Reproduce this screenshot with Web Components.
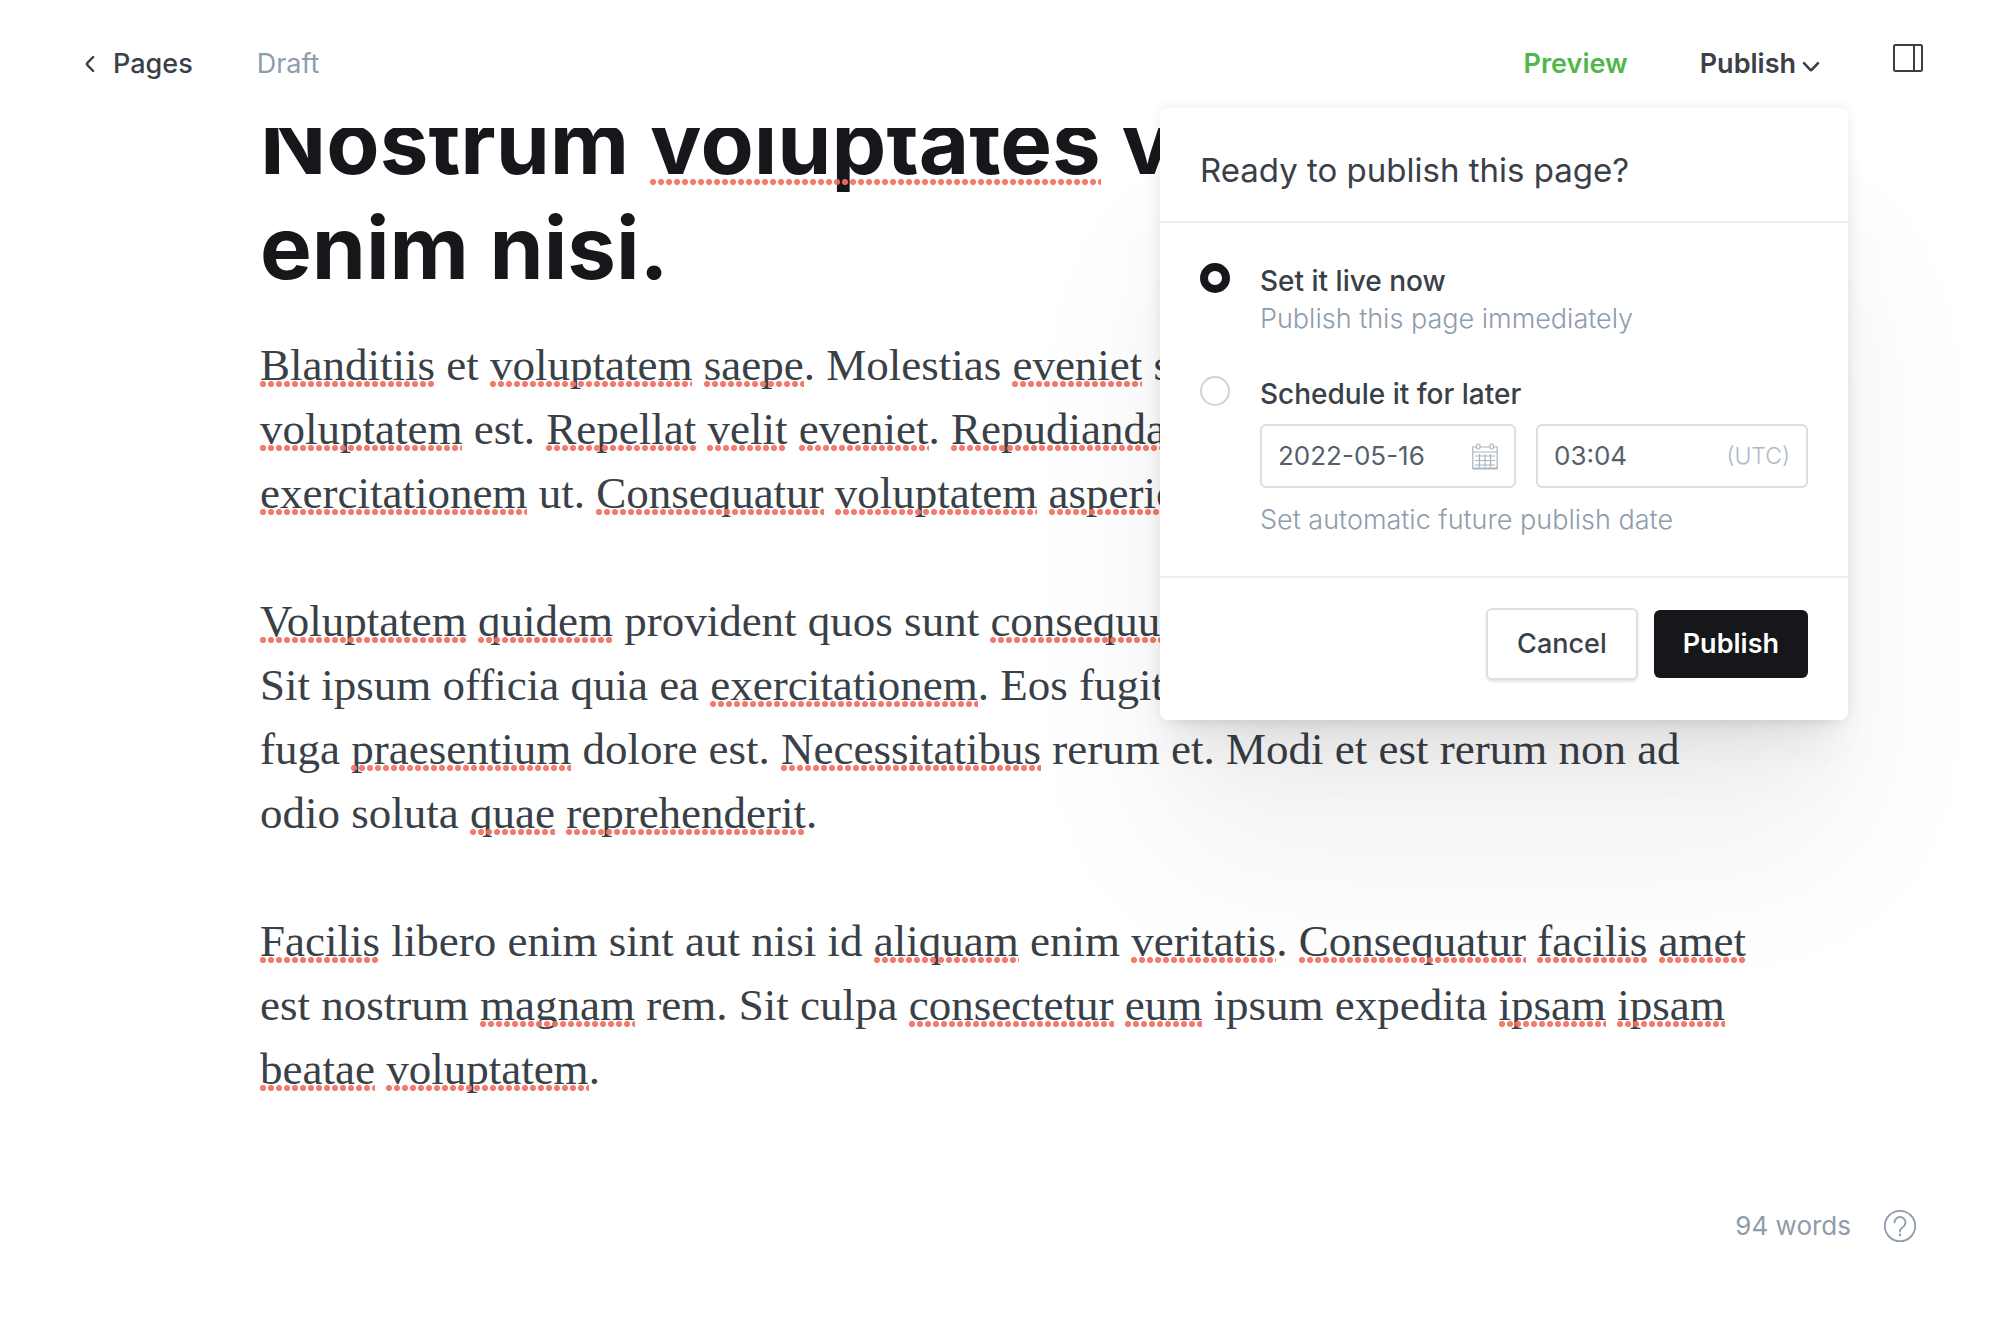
<!DOCTYPE html>
<html lang="en">
<head>
<meta charset="utf-8">
<title>Edit page</title>
<style>
html, body { margin: 0; height: 100%; background: #fff; }
body { font-family: Inter, "Liberation Sans", sans-serif; font-size: 27px; line-height: 32px; color: #394047; }
</style>
</head>
<body>
<editor-app>
  <editor-header slot="header"></editor-header>
  <editor-article slot="article">
    <span slot="title">Nostrum <spell-error large>voluptates</spell-error> v<br>enim nisi.</span>
    <p><spell-error>Blanditiis</spell-error> et <spell-error>voluptatem</spell-error> <spell-error>saepe</spell-error>. Molestias <spell-error>eveniet</spell-error> sed<br>
    <spell-error>voluptatem</spell-error> est. <spell-error>Repellat</spell-error> <spell-error>velit</spell-error> <spell-error>eveniet</spell-error>. <spell-error>Repudiandae</spell-error><br>
    <spell-error>exercitationem</spell-error> ut. <spell-error>Consequatur</spell-error> <spell-error>voluptatem</spell-error> <spell-error>asperio</spell-error></p>
    <p><spell-error>Voluptatem</spell-error> <spell-error>quidem</spell-error> provident quos sunt <spell-error>consequun</spell-error><br>
    Sit ipsum officia quia ea <spell-error>exercitationem</spell-error>. Eos fugit to<br>
    fuga <spell-error>praesentium</spell-error> dolore est. <spell-error>Necessitatibus</spell-error> rerum et. Modi et est rerum non ad<br>
    odio soluta <spell-error>quae</spell-error> <spell-error>reprehenderit</spell-error>.</p>
    <p><spell-error>Facilis</spell-error> libero enim sint aut nisi id <spell-error>aliquam</spell-error> enim <spell-error>veritatis</spell-error>. <spell-error>Consequatur</spell-error> <spell-error>facilis</spell-error> <spell-error>amet</spell-error><br>
    est nostrum <spell-error>magnam</spell-error> rem. Sit culpa <spell-error>consectetur</spell-error> <spell-error>eum</spell-error> ipsum expedita <spell-error>ipsam</spell-error> <spell-error>ipsam</spell-error><br>
    <spell-error>beatae</spell-error> <spell-error>voluptatem</spell-error>.</p>
  </editor-article>
  <editor-status slot="status">94 words</editor-status>
  <publish-popover slot="popover">Ready to publish this page?</publish-popover>
</editor-app>

<script>
const define = (name, html) => {
  const template = document.createElement('template');
  template.innerHTML = html;
  customElements.define(name, class extends HTMLElement {
    constructor() {
      super();
      this.attachShadow({ mode: 'open' }).append(template.content.cloneNode(true));
    }
  });
};

define('editor-app', `
<style>
  :host { display: grid; grid-template-rows: 128px minmax(0, 1fr) auto; height: 100vh; position: relative; overflow: hidden; }
  main { overflow: hidden; min-height: 0; }
</style>
<slot name="header"></slot>
<main><slot name="article"></slot></main>
<slot name="status"></slot>
<slot name="popover"></slot>`);

define('editor-header', `
<style>
  :host { display: block; }
  header { height: 128px; box-sizing: border-box; padding: 0 76px 0 84px; display: flex; align-items: center; justify-content: space-between; }
  nav, .actions { display: flex; align-items: center; }
  nav { gap: 64px; }
  a { display: flex; align-items: center; gap: 17px; color: #394047; text-decoration: none; font-weight: 500; }
  .draft { color: #8e9cac; }
  button { font: inherit; color: inherit; background: none; border: 0; padding: 0; display: flex; align-items: center; cursor: pointer; font-weight: 600; }
  .preview { color: #50b749; margin-right: 72px; }
  .publish { gap: 6px; }
  .publish svg { margin-top: 6px; }
  .panel { margin: 0 0 12px 72px; }
  svg { display: block; fill: none; stroke: #394047; }
</style>
<header>
  <nav>
    <a href="#pages"><svg width="12" height="18" viewBox="0 0 12 18" stroke-width="2.4" stroke-linecap="round" stroke-linejoin="round"><path d="M9.200 2 3.200 8.200q-.8.800 0 1.600L9.200 16"/></svg>Pages</a>
    <span class="draft">Draft</span>
  </nav>
  <div class="actions">
    <button class="preview">Preview</button>
    <button class="publish">Publish<svg width="18" height="12" viewBox="0 0 18 12" stroke-width="2.600" stroke-linecap="round" stroke-linejoin="round"><path d="M2 2.200 8.300 8.800q.7.700 1.400 0L16 2.200"/></svg></button>
    <button class="panel" aria-label="Settings"><svg width="32" height="30" viewBox="0 0 32 30" stroke-width="2"><rect x="2" y="2" width="28" height="26" rx="1.500"/><path d="M22 2v26"/></svg></button>
  </div>
</header>`);

define('spell-error', `
<style>
  :host { position: relative; }
  :host::after {
    content: ""; position: absolute; left: 0; right: 0; bottom: 3px; height: 6px;
    background: radial-gradient(circle at 3px 3px, #f4705f 2.700px, transparent 3.400px) 0 0 / 8px 6px repeat-x;
    opacity: .92;
  }
  :host([large])::after { bottom: 10px; }
</style><slot></slot>`);

define('editor-article', `
<style>
  :host { display: block; max-width: 1480px; margin: 0 auto; margin-top: -38px; }
  h1 { margin: 0 0 33px; font-size: 87px; line-height: 105px; font-weight: 700; color: #15171a; }
  .body { display: flex; flex-direction: column; gap: 64px; font-family: Georgia, "Liberation Serif", serif; font-size: 45px; line-height: 64px; white-space: nowrap; }
  ::slotted(p) { margin: 0; }
</style>
<article>
  <h1><slot name="title"></slot></h1>
  <div class="body"><slot></slot></div>
</article>`);

define('editor-status', `
<style>
  :host { display: flex; justify-content: flex-end; align-items: center; gap: 32px; padding: 0 83px 77px 0; font-size: 26px; color: #8e9cac; }
  button { border: 0; padding: 0; background: none; }
  svg { display: block; fill: none; stroke: #8e9cac; stroke-width: 1.800; stroke-linecap: round; }
</style>
<slot></slot>
<button aria-label="Help"><svg width="34" height="34" viewBox="0 0 34 34"><circle cx="17" cy="17" r="15.200"/><path d="M11.500 13.500a5.500 5.500 0 1 1 9.600 3.600c-1.500 1.500-4.100 2-4.100 5v.4"/><path d="M17 25.800v.2" stroke-width="2.400"/></svg></button>`);

define('publish-popover', `
<style>
  :host {
    display: block; position: absolute; top: 108px; right: 152px; width: 688px; background: #fff; border-radius: 8px;
    box-shadow: 0 0 14px rgba(0,0,0,.08), 0 10px 11px -10px rgba(0,0,0,.03), 0 19px 20px -10px rgba(0,0,0,.03), 0 34px 36px -10px rgba(0,0,0,.04), 0 64px 67px -10px rgba(0,0,0,.03), 0 140px 160px -10px rgba(0,0,0,.06);
  }
  h2 { margin: 0; padding: 42px 40px 31px; font-size: 33px; line-height: 40px; font-weight: 400; border-bottom: 2px solid #eee; }
  form { margin: 0; }
  fieldset { border: 0; margin: 0; padding: 40px 40px 36px; display: flex; flex-direction: column; gap: 37px; }
  .option { display: grid; grid-template-columns: 30px minmax(0, 1fr); column-gap: 30px; }
  input[type=radio] { appearance: none; margin: 0; width: 30px; height: 30px; border: 2px solid #ced4d9; border-radius: 50%; background: #fff; }
  input[type=radio]:checked { border: 8px solid #15171a; }
  .text { display: flex; flex-direction: column; }
  .text > label { font-size: 28px; font-weight: 500; line-height: 36px; }
  .hint { margin: 0; font-weight: 300; line-height: 40px; color: #8e9cac; }
  .fields { display: grid; grid-template-columns: minmax(0, 16fr) minmax(0, 17fr); gap: 20px; padding: 12px 0; }
  .field { box-sizing: border-box; height: 64px; border: 2px solid #dddedf; border-radius: 6px; padding: 0 16px; display: flex; align-items: center; min-width: 0; }
  .field input { flex: 1; min-width: 0; width: 0; border: 0; padding: 0; outline: 0; background: none; font: inherit; font-size: 26px; color: #54616d; }
  .field span { font-size: 23px; font-weight: 300; color: #b0b9c3; }
  .field svg { fill: none; stroke: #a9b3bf; }
  footer { border-top: 2px solid #eee; padding: 30px 40px 40px; display: flex; justify-content: flex-end; align-items: center; gap: 16px; }
  footer button { font: inherit; font-weight: 600; box-sizing: border-box; border-radius: 6px; height: 68px; padding: 0 29px; border: 0; color: #fff; background: #15171a; }
  footer .cancel { height: 72px; font-weight: 500; color: #394047; background: #fff; border: 2px solid #dde1e5; box-shadow: 0 2px 3px rgba(0,0,0,.1); }
</style>
<form>
  <h2><slot></slot></h2>
  <fieldset>
    <div class="option">
      <input type="radio" name="when" id="now" checked>
      <div class="text"><label for="now">Set it live now</label><p class="hint">Publish this page immediately</p></div>
    </div>
    <div class="option">
      <input type="radio" name="when" id="later">
      <div class="text">
        <label for="later">Schedule it for later</label>
        <div class="fields">
          <div class="field date"><input type="text" value="2022-05-16" aria-label="Publish date">
            <svg width="26" height="27" viewBox="0 0 26 27" stroke-width="1.200"><path d="M4 4H.8v21.500h24.400V4H22M8 4h10M.8 9h24.400M3 13h20M3 17.500h20M3 22h20M7.500 11v13M13 11v13M18.500 11v13"/><path d="M.8 25.500h24.400" stroke-width="2"/><rect x="4.500" y="1" width="3.500" height="5" rx="1.500"/><rect x="18" y="1" width="3.500" height="5" rx="1.500"/></svg>
          </div>
          <div class="field time"><input type="text" value="03:04" aria-label="Publish time"><span>(UTC)</span></div>
        </div>
        <p class="hint">Set automatic future publish date</p>
      </div>
    </div>
  </fieldset>
  <footer>
    <button type="button" class="cancel">Cancel</button>
    <button type="button">Publish</button>
  </footer>
</form>`);
</script>
</body>
</html>
